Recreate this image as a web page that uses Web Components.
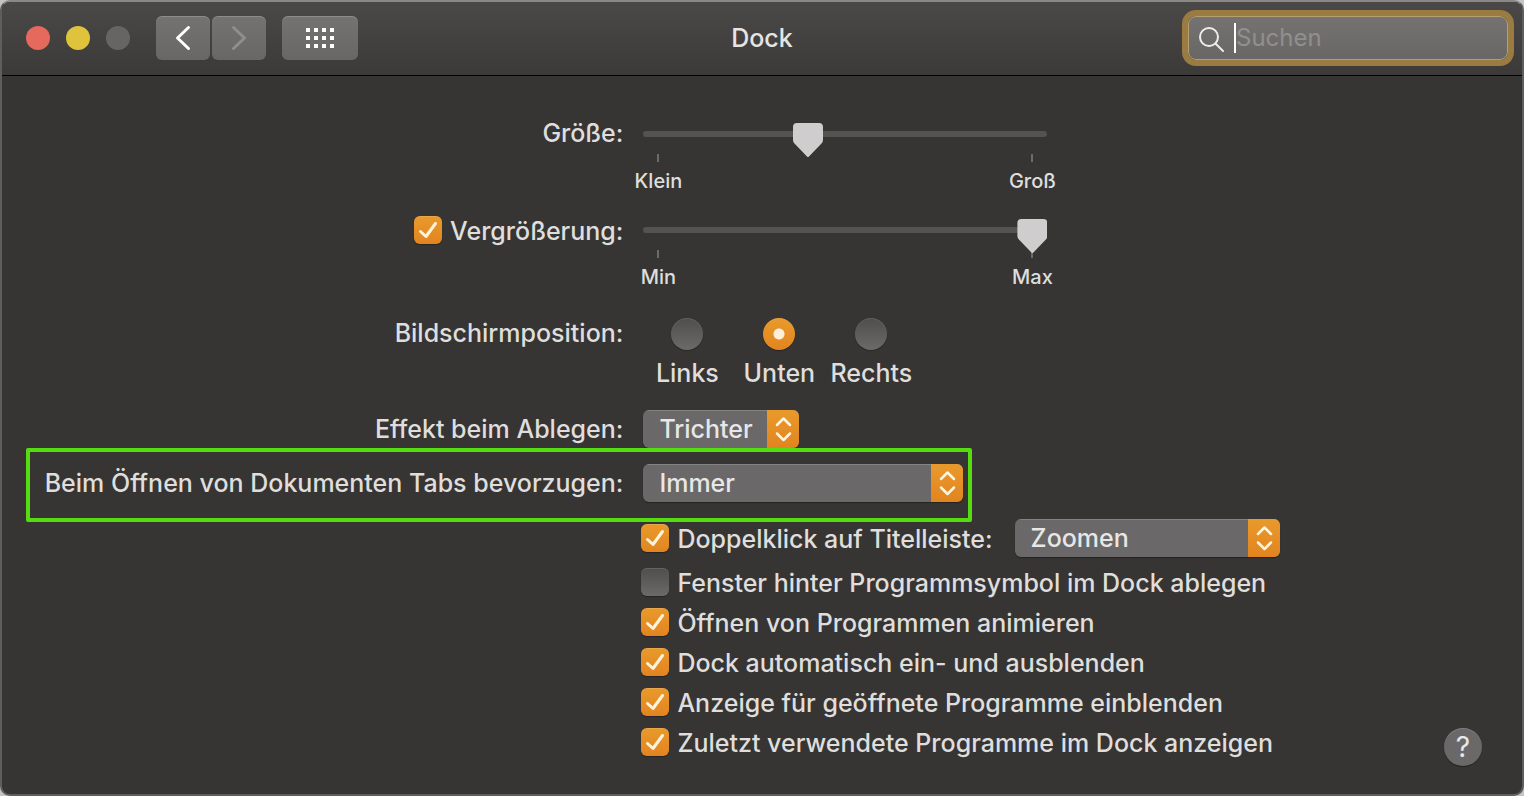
<!DOCTYPE html>
<html lang="de">
<head>
<meta charset="utf-8">
<meta name="viewport" content="width=device-width, initial-scale=1">
<title>Dock</title>
<style>
  body {
    margin: 0;
    min-height: 100vh;
    display: flex;
    background: #c4c4c4;
    color: #dfdedd;
    font: 500 25px/32px Inter, "Liberation Sans", sans-serif;
  }
</style>
</head>
<body>
<prefs-window>
  <prefs-toolbar slot="toolbar" heading="Dock">
    <search-field placeholder="Suchen"></search-field>
  </prefs-toolbar>
  <slider-setting label="Größe:" low="Klein" high="Groß" value="40"></slider-setting>
  <slider-setting label="Vergrößerung:" low="Min" high="Max" value="100" checkable></slider-setting>
  <radio-setting label="Bildschirmposition:" options="Links,Unten,Rechts" value="Unten"></radio-setting>
  <select-setting label="Effekt beim Ablegen:" options="Trichter,Linear" size="small"></select-setting>
  <select-setting label="Beim Öffnen von Dokumenten Tabs bevorzugen:" options="Immer,Nur im Vollbildmodus,Manuell" size="large" highlight></select-setting>
  <check-setting label="Doppelklick auf Titelleiste:" options="Zoomen,Im Dock ablegen" checked></check-setting>
  <check-setting label="Fenster hinter Programmsymbol im Dock ablegen"></check-setting>
  <check-setting label="Öffnen von Programmen animieren" checked></check-setting>
  <check-setting label="Dock automatisch ein- und ausblenden" checked></check-setting>
  <check-setting label="Anzeige für geöffnete Programme einblenden" checked></check-setting>
  <check-setting label="Zuletzt verwendete Programme im Dock anzeigen" checked>
    <help-button></help-button>
  </check-setting>
</prefs-window>

<script>
  // Two columns shared by every row: right-aligned label, then the control
  const rowStyles = `
    :host {
      display: grid;
      grid-template-columns: minmax(0, 42fr) minmax(0, 58fr);
    }

    .label {
      display: flex;
      justify-content: flex-end;
      align-items: center;
      gap: 8px;
      padding-right: 17px;
      white-space: nowrap;
    }
  `;

  const checkStyles = `
    .box {
      display: inline-grid;
      flex: none;
      margin-bottom: 2px;
    }

    .box input,
    .box svg {
      grid-area: 1 / 1;
      width: 28px;
      height: 28px;
    }

    .box input {
      appearance: none;
      margin: 0;
      border-radius: 6px;
      background: linear-gradient(#4f4e4d, #6b6a69);
      box-shadow: inset 0 1px rgb(255 255 255 / 12%), 0 1px 1px rgb(0 0 0 / 30%);
    }

    .box input:checked {
      background: linear-gradient(#e99a2c, #e28420);
    }

    .box svg {
      pointer-events: none;
      visibility: hidden;
    }

    .box input:checked + svg {
      visibility: visible;
    }
  `;

  const popupStyles = `
    .popup {
      display: inline-grid;
      height: 38px;
      border-radius: 6px;
      overflow: hidden;
      background: #6a6869;
      box-shadow: 0 1px 1px rgb(0 0 0 / 35%);
    }

    .popup select {
      grid-area: 1 / 1;
      appearance: none;
      min-width: 0;
      margin: 0;
      padding: 0 40px 0 16px;
      border: 0;
      outline: none;
      background: transparent;
      box-shadow: inset 0 1px rgb(255 255 255 / 18%);
      color: #e8e7e7;
      font: inherit;
    }

    .popup option {
      background: #4a4847;
    }

    .popup svg {
      grid-area: 1 / 1;
      justify-self: end;
      width: 32px;
      height: 38px;
      background: linear-gradient(#e99a2c, #e28420);
      pointer-events: none;
    }
  `;

  const checkbox = (id, checked) => `
    <span class="box">
      <input type="checkbox" id="${id}" ${checked ? 'checked' : ''}>
      <svg viewBox="0 0 28 28" fill="none" stroke="#fff3dc" stroke-width="3" stroke-linecap="round" stroke-linejoin="round" aria-hidden="true">
        <path d="M6.500 15.500 12 20.500 21.500 7.500"/>
      </svg>
    </span>
  `;

  const popup = (id, options, label = '') => `
    <span class="popup">
      <select id="${id}" ${label ? `aria-label="${label}"` : ''}>
        ${options.split(',').map((text) => `<option>${text}</option>`).join('')}
      </select>
      <svg viewBox="0 0 32 38" fill="none" stroke="#fff3dc" stroke-width="2.500" stroke-linecap="round" stroke-linejoin="round" aria-hidden="true">
        <path d="M10 15 16.500 8.500 23 15M10 23.500 16.500 30 23 23.500"/>
      </svg>
    </span>
  `;

  class PrefsWindow extends HTMLElement {
    constructor() {
      super();
      this.attachShadow({ mode: 'open' });
      this.shadowRoot.innerHTML = `
        <style>
          :host {
            flex: 1;
            display: flex;
            flex-direction: column;
            min-width: 0;
            box-sizing: border-box;
            border: 2px solid #5f5e5c;
            border-top-color: #8a8987;
            border-radius: 10px;
            overflow: hidden;
            background: #373533;
          }

          main {
            display: flex;
            flex-direction: column;
            padding: 41px 0 28px;
          }
        </style>
        <slot name="toolbar"></slot>
        <main><slot></slot></main>
      `;
    }
  }

  class PrefsToolbar extends HTMLElement {
    connectedCallback() {
      this.attachShadow({ mode: 'open' });
      this.shadowRoot.innerHTML = `
        <style>
          :host {
            display: grid;
            grid-template-columns: 1fr auto 1fr;
            align-items: center;
            padding: 14px 14px 15px;
            border-bottom: 1px solid #000;
            background: linear-gradient(#4b4947, #3c3a38);
          }

          nav,
          .lights,
          .history {
            display: flex;
            align-items: center;
          }

          .lights {
            gap: 16px;
            margin: 0 26px 0 10px;
          }

          .history {
            gap: 2px;
            margin-right: 16px;
          }

          button {
            display: grid;
            place-items: center;
            padding: 0;
            border: 0;
            color: #fff;
          }

          .light {
            width: 24px;
            height: 24px;
            border-radius: 50%;
            background: #666564;
          }

          .close { background: #e5695c; }
          .minimize { background: #dfc33d; }

          .tool {
            width: 54px;
            height: 44px;
            border-radius: 6px;
            background: linear-gradient(#747371, #686765);
            box-shadow: inset 0 1px rgb(255 255 255 / 18%);
          }

          .tool:disabled { color: #8f8e8d; }
          .wide { width: 76px; }

          h1 {
            margin: 0;
            font: inherit;
            color: #e6e5e4;
          }

          .end { justify-self: end; }
        </style>
        <nav>
          <div class="lights">
            <button class="light close" aria-label="Schließen"></button>
            <button class="light minimize" aria-label="Minimieren"></button>
            <button class="light" aria-label="Zoomen" disabled></button>
          </div>
          <div class="history">
            <button class="tool" aria-label="Zurück">
              <svg width="54" height="44" fill="none" stroke="currentColor" stroke-width="3" stroke-linecap="round" stroke-linejoin="round"><path d="M32.500 11.500 21.500 22 32.500 32.500"/></svg>
            </button>
            <button class="tool" aria-label="Vorwärts" disabled>
              <svg width="54" height="44" fill="none" stroke="currentColor" stroke-width="3" stroke-linecap="round" stroke-linejoin="round"><path d="M21.500 11.500 32.500 22 21.500 32.500"/></svg>
            </button>
          </div>
          <button class="tool wide" aria-label="Alle einblenden">
            <svg width="28" height="20" fill="currentColor">
              <path d="M0 0h4v4h-4zM8 0h4v4h-4zM16 0h4v4h-4zM24 0h4v4h-4zM0 8h4v4h-4zM8 8h4v4h-4zM16 8h4v4h-4zM24 8h4v4h-4zM0 16h4v4h-4zM8 16h4v4h-4zM16 16h4v4h-4zM24 16h4v4h-4z"/>
            </svg>
          </button>
        </nav>
        <h1>${this.getAttribute('heading')}</h1>
        <div class="end"><slot></slot></div>
      `;
    }
  }

  class SearchField extends HTMLElement {
    connectedCallback() {
      const placeholder = this.getAttribute('placeholder');

      this.attachShadow({ mode: 'open' });
      this.shadowRoot.innerHTML = `
        <style>
          :host {
            display: flex;
            align-items: center;
            box-sizing: border-box;
            width: 320px;
            height: 44px;
            padding: 0 10px;
            border: 1px solid #b89f70;
            border-radius: 8px;
            background: linear-gradient(#747371, #686765);
            box-shadow: 0 0 0 6px #9a7b42;
          }

          svg {
            flex: none;
            margin-right: 9px;
          }

          .caret {
            flex: none;
            width: 2px;
            height: 30px;
            background: #fff;
          }

          input {
            flex: 1;
            min-width: 0;
            padding: 0;
            border: 0;
            outline: none;
            background: none;
            color: #fff;
            caret-color: transparent;
            font: inherit;
            font-size: 24px;
            font-weight: 400;
          }

          input::placeholder { color: #918f8e; }
        </style>
        <svg width="26" height="28" fill="none" stroke="#eeedec" stroke-width="2" stroke-linecap="round" aria-hidden="true">
          <circle cx="10" cy="13" r="9"/>
          <path d="M16.500 19.500 24 27"/>
        </svg>
        <span class="caret"></span>
        <input type="text" placeholder="${placeholder}" aria-label="${placeholder}">
      `;
    }
  }

  class SliderSetting extends HTMLElement {
    connectedCallback() {
      const label = this.getAttribute('label');
      const checkable = this.hasAttribute('checkable');

      this.attachShadow({ mode: 'open' });
      this.shadowRoot.innerHTML = `
        <style>
          ${rowStyles}
          ${checkStyles}

          :host { margin-bottom: 20px; }
          .label { height: 32px; }
          :host([checkable]) .label { height: 36px; }

          .slider {
            width: 404px;
            max-width: 90%;
            padding: 6px 0 0 3px;
          }

          .slider input {
            appearance: none;
            display: block;
            position: relative;
            z-index: 1;
            width: 100%;
            height: 22px;
            margin: 0;
            outline: none;
            background: none;
          }

          .slider input::-webkit-slider-runnable-track {
            height: 6px;
            border-radius: 3px;
            background: #545351;
          }

          .slider input::-webkit-slider-thumb {
            appearance: none;
            width: 30px;
            height: 34px;
            margin-top: -8px;
            background: #cfcdce;
            clip-path: path('M4 0H26Q30 0 30 4V17Q30 19 28.500 20.500L16 33.500Q15 34.500 14 33.500L1.500 20.500Q0 19 0 17V4Q0 0 4 0Z');
          }

          .scale {
            display: flex;
            justify-content: space-between;
            padding-top: 9px;
            font-size: 20px;
            line-height: 24px;
          }

          .scale span {
            display: flex;
            flex-direction: column;
            align-items: center;
            gap: 7px;
            width: 30px;
            white-space: nowrap;
          }

          .scale span::before {
            content: '';
            width: 2px;
            height: 8px;
            background: #6c6b69;
          }
        </style>
        <div class="label">
          ${checkable ? checkbox('enabled', true) : ''}
          <label for="${checkable ? 'enabled' : 'range'}">${label}</label>
        </div>
        <div class="slider">
          <input type="range" id="range" min="0" max="100" value="${this.getAttribute('value')}" aria-label="${label}">
          <div class="scale">
            <span>${this.getAttribute('low')}</span>
            <span>${this.getAttribute('high')}</span>
          </div>
        </div>
      `;
    }
  }

  class RadioSetting extends HTMLElement {
    connectedCallback() {
      const value = this.getAttribute('value');
      const options = this.getAttribute('options').split(',');

      this.attachShadow({ mode: 'open' });
      this.shadowRoot.innerHTML = `
        <style>
          ${rowStyles}

          :host { margin: 8px 0 21px; }
          .label { height: 32px; }

          .group {
            display: flex;
            padding: 1px 0 0 1px;
          }

          .group label {
            display: flex;
            flex-direction: column;
            align-items: center;
            gap: 7px;
            width: 92px;
          }

          input {
            appearance: none;
            width: 32px;
            height: 32px;
            margin: 0;
            border-radius: 50%;
            background: linear-gradient(#4f4e4d, #6b6a69);
            box-shadow: inset 0 1px rgb(255 255 255 / 10%), 0 1px 1px rgb(0 0 0 / 30%);
          }

          input:checked {
            background:
              radial-gradient(circle, #ffefd8 5px, transparent 6px),
              linear-gradient(#e99a2c, #e28420);
          }
        </style>
        <div class="label" id="name">${this.getAttribute('label')}</div>
        <div class="group" role="radiogroup" aria-labelledby="name">
          ${options.map((text) => `
            <label>
              <input type="radio" name="position" ${text === value ? 'checked' : ''}>
              ${text}
            </label>
          `).join('')}
        </div>
      `;
    }
  }

  class SelectSetting extends HTMLElement {
    connectedCallback() {
      this.attachShadow({ mode: 'open' });
      this.shadowRoot.innerHTML = `
        <style>
          ${rowStyles}
          ${popupStyles}

          :host {
            position: relative;
            margin-bottom: 16px;
          }

          .control {
            display: flex;
            padding-left: 3px;
          }

          .popup { width: 156px; }
          :host([size='large']) .popup { width: 320px; }

          /* marker frame drawn over the neighbouring rows */
          :host([highlight])::after {
            content: '';
            position: absolute;
            inset: -16px auto -20px 24px;
            width: calc(42% + 308px);
            box-sizing: border-box;
            border: 4px solid #55dd11;
            border-radius: 2px;
            pointer-events: none;
          }
        </style>
        <div class="label"><label for="choice">${this.getAttribute('label')}</label></div>
        <div class="control">${popup('choice', this.getAttribute('options'))}</div>
      `;
    }
  }

  class CheckSetting extends HTMLElement {
    connectedCallback() {
      const label = this.getAttribute('label');
      const options = this.getAttribute('options');

      this.attachShadow({ mode: 'open' });
      this.shadowRoot.innerHTML = `
        <style>
          ${rowStyles}
          ${checkStyles}
          ${popupStyles}

          :host([options]) { margin: 1px 0 4px; }

          .control {
            grid-column: 2;
            display: flex;
            padding: 0 40px 0 1px;
            white-space: nowrap;
          }

          .check {
            display: flex;
            align-items: center;
            gap: 8px;
            height: 40px;
          }

          .popup {
            width: 265px;
            margin-left: 22px;
          }
        </style>
        <div class="control">
          <div class="check">
            ${checkbox('check', this.hasAttribute('checked'))}
            <label for="check">${label}</label>
          </div>
          ${options ? popup('action', options, label) : ''}
          <slot></slot>
        </div>
      `;
    }
  }

  class HelpButton extends HTMLElement {
    constructor() {
      super();
      this.attachShadow({ mode: 'open' });
      this.shadowRoot.innerHTML = `
        <style>
          :host {
            display: block;
            margin: 5px 0 0 auto;
          }

          button {
            display: block;
            width: 38px;
            height: 38px;
            padding: 0;
            border: 0;
            border-radius: 50%;
            background: #6a6869;
            box-shadow: inset 0 1px rgb(255 255 255 / 15%), 0 1px 1px rgb(0 0 0 / 35%);
            color: #e8e7e7;
            font: inherit;
            font-size: 28px;
            font-weight: 400;
          }
        </style>
        <button aria-label="Hilfe">?</button>
      `;
    }
  }

  customElements.define('prefs-window', PrefsWindow);
  customElements.define('prefs-toolbar', PrefsToolbar);
  customElements.define('search-field', SearchField);
  customElements.define('slider-setting', SliderSetting);
  customElements.define('radio-setting', RadioSetting);
  customElements.define('select-setting', SelectSetting);
  customElements.define('check-setting', CheckSetting);
  customElements.define('help-button', HelpButton);
</script>
</body>
</html>
